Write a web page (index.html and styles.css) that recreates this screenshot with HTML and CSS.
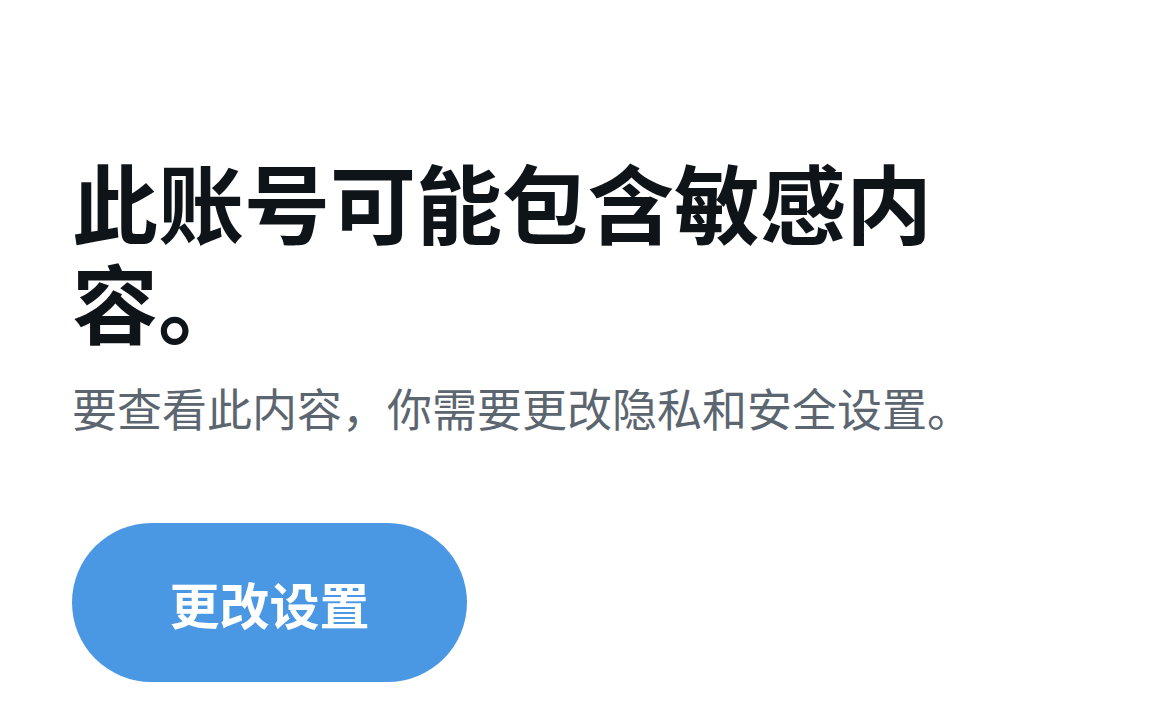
FILE: index.html
```html
<!DOCTYPE html>
<html lang="zh-CN">
<head>
<meta charset="utf-8">
<link rel="stylesheet" href="styles.css">
</head>
<body>
<main class="page">
  <h1 class="title">此账号可能包含敏感内容。</h1>
  <p class="desc">要查看此内容，你需要更改隐私和安全设置。</p>
  <button class="btn">更改设置</button>
</main>
</body>
</html>
```
FILE: styles.css
```css
html, body {
  margin: 0;
  padding: 0;
  background: #ffffff;
}
body {
  font-family: "Noto Sans CJK SC", "Noto Sans", sans-serif;
  width: 1170px;
  height: 718px;
  overflow: hidden;
}
.page {
  padding: 151px 0 0 72px;
  display: flex;
  flex-direction: column;
  align-items: flex-start;
}
.title {
  margin: 0;
  width: 900px;
  font-size: 86px;
  line-height: 100px;
  font-weight: 700;
  color: #0f1419;
}
.desc {
  margin: 28px 0 0 0;
  font-size: 45px;
  line-height: 58px;
  color: #5b6670;
}
.btn {
  margin-top: 86px;
  width: 395px;
  height: 159px;
  border: none;
  border-radius: 80px;
  background: #4a97e4;
  color: #ffffff;
  font-family: "Noto Sans CJK SC", sans-serif;
  font-size: 50px;
  font-weight: 700;
  padding: 0;
}
```
